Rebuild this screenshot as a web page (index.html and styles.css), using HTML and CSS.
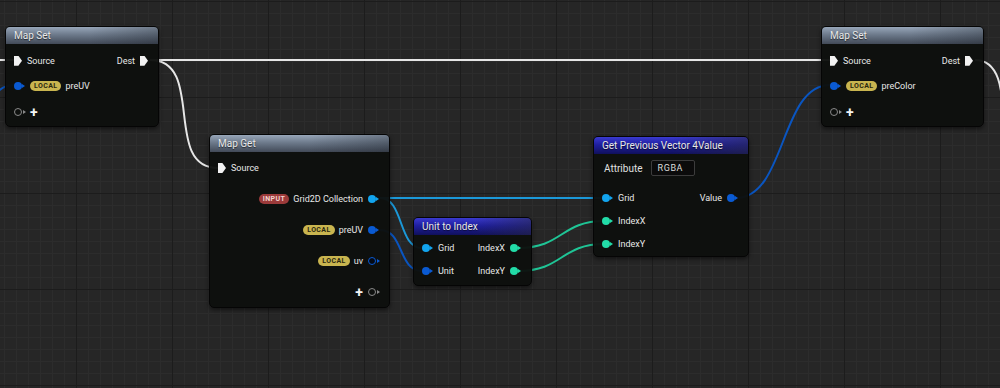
FILE: index.html
```html
<!DOCTYPE html>
<html lang="en">
<head>
<meta charset="UTF-8">
<meta name="viewport" content="width=device-width, initial-scale=1.0">
<title>Niagara Graph</title>
<link rel="stylesheet" href="styles.css">
</head>
<body>

<div class="graph">

  <!-- wires sit under the nodes -->
  <svg class="wires" width="1000" height="388" viewBox="0 0 1000 388">
    <g fill="none" stroke-width="2">
      <path d="M0 60 H14" stroke="#e6e6e6"/>
      <path d="M150 60 H830" stroke="#e6e6e6"/>
      <path d="M150 60 C206 60 162 168 218 168" stroke="#e6e6e6"/>
      <path d="M975 60 C1010 60 1000 120 1010 160" stroke="#e6e6e6"/>
      <path d="M-30 100 C0 100 -5 85 15 85" stroke="#0a55c0"/>
      <path d="M736 198 C786 198 780 85 830 85" stroke="#0a55c0"/>
      <path d="M380 198 H604" stroke="#1b98d8"/>
      <path d="M380 198 C404 198 398 248 422 248" stroke="#1b98d8"/>
      <path d="M380 230 C404 230 398 271 422 271" stroke="#0a55c0"/>
      <path d="M519 248 C562 248 561 221 604 221" stroke="#1fc596"/>
      <path d="M519 271 C562 271 561 244 604 244" stroke="#1fc596"/>
    </g>
  </svg>

  <div class="node node-mapset-a">
    <div class="node-head head-gray">Map Set</div>
    <div class="node-body body-set">
      <div class="row">
        <div class="side"><span class="exec"></span><span>Source</span></div>
        <div class="side"><span>Dest</span><span class="exec"></span></div>
      </div>
      <div class="row">
        <div class="side"><span class="pin blue"></span><span class="badge local">LOCAL</span><span>preUV</span></div>
      </div>
      <div class="row">
        <div class="side"><span class="pin hollow gray"></span><span class="plus">+</span></div>
      </div>
    </div>
  </div>

  <div class="node node-mapget">
    <div class="node-head head-gray">Map Get</div>
    <div class="node-body body-get">
      <div class="row">
        <div class="side"><span class="exec"></span><span>Source</span></div>
      </div>
      <div class="row end">
        <div class="side"><span class="badge input">INPUT</span><span>Grid2D Collection</span><span class="pin cyan"></span></div>
      </div>
      <div class="row end">
        <div class="side"><span class="badge local">LOCAL</span><span>preUV</span><span class="pin blue"></span></div>
      </div>
      <div class="row end">
        <div class="side"><span class="badge local">LOCAL</span><span>uv</span><span class="pin hollow blue"></span></div>
      </div>
      <div class="row end">
        <div class="side"><span class="plus">+</span><span class="pin hollow gray"></span></div>
      </div>
    </div>
  </div>

  <div class="node node-unit">
    <div class="node-head head-blue">Unit to Index</div>
    <div class="node-body body-unit">
      <div class="row">
        <div class="side"><span class="pin cyan"></span><span>Grid</span></div>
        <div class="side"><span>IndexX</span><span class="pin teal"></span></div>
      </div>
      <div class="row">
        <div class="side"><span class="pin blue"></span><span>Unit</span></div>
        <div class="side"><span>IndexY</span><span class="pin teal"></span></div>
      </div>
    </div>
  </div>

  <div class="node node-prev">
    <div class="node-head head-blue">Get Previous Vector 4Value</div>
    <div class="node-body body-prev">
      <div class="row attr-row">
        <span class="attr-label">Attribute</span>
        <span class="attr-box">RGBA</span>
      </div>
      <div class="row">
        <div class="side"><span class="pin cyan"></span><span>Grid</span></div>
        <div class="side"><span>Value</span><span class="pin blue"></span></div>
      </div>
      <div class="row">
        <div class="side"><span class="pin teal"></span><span>IndexX</span></div>
      </div>
      <div class="row">
        <div class="side"><span class="pin teal"></span><span>IndexY</span></div>
      </div>
    </div>
  </div>

  <div class="node node-mapset-b">
    <div class="node-head head-gray">Map Set</div>
    <div class="node-body body-set">
      <div class="row">
        <div class="side"><span class="exec"></span><span>Source</span></div>
        <div class="side"><span>Dest</span><span class="exec"></span></div>
      </div>
      <div class="row">
        <div class="side"><span class="pin blue"></span><span class="badge local">LOCAL</span><span>preColor</span></div>
      </div>
      <div class="row">
        <div class="side"><span class="pin hollow gray"></span><span class="plus">+</span></div>
      </div>
    </div>
  </div>

</div>

</body>
</html>
```

FILE: styles.css
```css
body {
  margin: 0;
  background-color: #262626;
  font-family: Roboto, "Liberation Sans", sans-serif;
}
.graph {
  position: relative;
  width: 1000px;
  height: 388px;
  overflow: hidden;
  background-color: #262626;
  background-image:
    linear-gradient(90deg, #1c1c1c 1px, transparent 1px),
    linear-gradient(#1c1c1c 1px, transparent 1px),
    linear-gradient(90deg, #2c2c2c 1px, transparent 1px),
    linear-gradient(#2c2c2c 1px, transparent 1px);
  background-size: 96px 96px, 96px 96px, 12px 12px, 12px 12px;
  background-position: 76px 1px, 76px 1px, 4px 1px, 4px 1px;
}
.wires {
  position: absolute;
  left: 0;
  top: 0;
}

/* nodes */
.node {
  position: absolute;
  box-sizing: border-box;
  display: flex;
  flex-direction: column;
  background-color: rgba(14, 16, 14, 0.96);
  border: 1px solid #050505;
  border-radius: 5px;
  box-shadow: 0 2px 4px rgba(0, 0, 0, 0.5);
  color: #e8e8e8;
  font-size: 9px;
}
.node-mapset-a { left: 5px; top: 26px; width: 154px; height: 101px; }
.node-mapget { left: 209px; top: 134px; width: 181px; height: 174px; }
.node-unit { left: 413px; top: 217px; width: 119px; height: 69px; }
.node-prev { left: 593px; top: 136px; width: 156px; height: 121px; }
.node-mapset-b { left: 821px; top: 26px; width: 163px; height: 101px; }

.node-head {
  height: 17px;
  line-height: 17px;
  padding-left: 8px;
  font-size: 10px;
  color: #e8e8e8;
  text-shadow: 0 1px 1px rgba(0, 0, 0, 0.6);
  border-radius: 4px 4px 0 0;
  white-space: nowrap;
}
.head-gray {
  background:
    linear-gradient(90deg, rgba(0, 0, 0, 0) 55%, rgba(20, 24, 30, 0.3)),
    linear-gradient(#97a6b9, #6d7a8b 45%, #424a58);
}
.head-blue {
  background:
    linear-gradient(90deg, rgba(0, 0, 0, 0) 50%, rgba(40, 40, 70, 0.55)),
    linear-gradient(#3a3ad0, #1f1fa0 45%, #10105c);
}

.node-body {
  display: flex;
  flex-direction: column;
  padding: 0 10px 0 8px;
}
.body-set { padding-top: 4px; }
.body-set .row { height: 25.5px; }
.body-get { padding-top: 4px; gap: 7px; }
.body-unit { padding-top: 2px; gap: 1px; }
.body-unit .row { height: 22px; }
.body-prev { padding-top: 3px; gap: 1px; }
.body-prev .row { height: 22px; }
.body-prev .attr-row { margin-bottom: 7px; }

.row {
  height: 24px;
  display: flex;
  align-items: center;
  justify-content: space-between;
  white-space: nowrap;
}
.row.end { justify-content: flex-end; }
.side {
  display: flex;
  align-items: center;
  gap: 5px;
}

/* pins */
.exec {
  width: 8px;
  height: 10px;
  background-color: #f2f2f2;
  clip-path: polygon(0 0, 55% 0, 100% 50%, 55% 100%, 0 100%);
}
.pin {
  position: relative;
  width: 8px;
  height: 8px;
  margin-right: 3px;
  border-radius: 50%;
}
.pin::after {
  content: "";
  position: absolute;
  right: -3px;
  top: 2px;
  border-left: 3px solid currentColor;
  border-top: 2px solid transparent;
  border-bottom: 2px solid transparent;
}
.pin.cyan { background-color: #12a4ee; color: #12a4ee; }
.pin.blue { background-color: #0a5ad2; color: #0a5ad2; }
.pin.teal { background-color: #22dca8; color: #22dca8; }
.pin.hollow {
  background-color: transparent;
  border: 1.5px solid;
  width: 6px;
  height: 6px;
}
.pin.hollow::after { top: 1px; right: -4.5px; }
.pin.hollow.gray { border-color: #8a8a8a; color: #8a8a8a; }
.pin.hollow.blue { border-color: #0a5ad2; color: #0a5ad2; background-color: #050a14; }

.plus {
  font-size: 14px;
  font-weight: 700;
  color: #f4f4f4;
  line-height: 1;
}

/* badges */
.badge {
  height: 10px;
  line-height: 10px;
  padding: 0 4px;
  border-radius: 5px;
  font-size: 7px;
  font-weight: 700;
  letter-spacing: 0.4px;
  margin-right: -1px;
}
.badge.local { background-color: #c9b54f; color: #2b2810; }
.badge.input { background-color: #9b3a3a; color: #f2d4d0; }

/* attribute field */
.attr-row { justify-content: flex-start; gap: 8px; padding-left: 2px; }
.attr-label { font-size: 10px; color: #e0e0e0; }
.attr-box {
  width: 36px;
  height: 14px;
  line-height: 14px;
  padding-left: 6px;
  background-color: #0b0b0b;
  border: 1px solid #3c3c3c;
  border-radius: 2px;
  letter-spacing: 0.6px;
  color: #dcdcdc;
}
```
